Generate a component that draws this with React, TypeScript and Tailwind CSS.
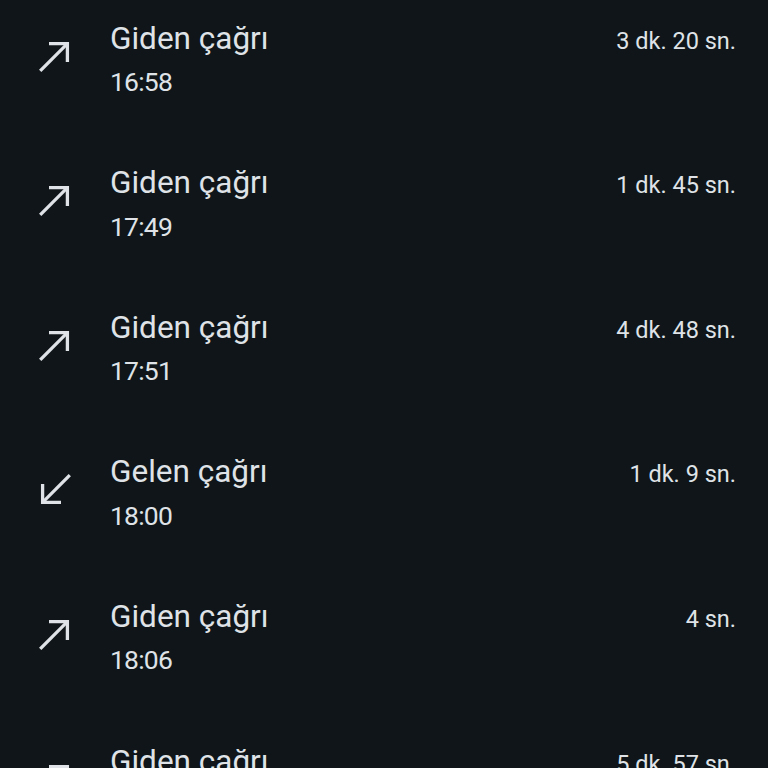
import React from "react";

interface CallItem {
  type: "out" | "in";
  time: string;
  duration: string;
}

const calls: CallItem[] = [
  { type: "out", time: "16:58", duration: "3 dk. 20 sn." },
  { type: "out", time: "17:49", duration: "1 dk. 45 sn." },
  { type: "out", time: "17:51", duration: "4 dk. 48 sn." },
  { type: "in", time: "18:00", duration: "1 dk. 9 sn." },
  { type: "out", time: "18:06", duration: "4 sn." },
  { type: "out", time: "18:11", duration: "5 dk. 57 sn." },
];

function OutgoingIcon() {
  return (
    <svg viewBox="0 0 24 24" className="w-12 h-12" fill="none" stroke="#dfe3e7" strokeWidth={1.65}>
      <polyline points="9,5.8 18.2,5.8 18.2,15" strokeLinejoin="miter" />
      <line x1="18.2" y1="5.8" x2="4.6" y2="19.4" />
    </svg>
  );
}

function IncomingIcon() {
  return (
    <svg viewBox="0 0 24 24" className="w-12 h-12" fill="none" stroke="#dfe3e7" strokeWidth={1.65}>
      <polyline points="5.8,9 5.8,18.2 15,18.2" strokeLinejoin="miter" />
      <line x1="5.8" y1="18.2" x2="19.4" y2="4.6" />
    </svg>
  );
}

export default function App() {
  return (
    <div className="h-[768px] w-[768px] overflow-hidden bg-[#0f1519] font-['Roboto',sans-serif] text-[#dfe3e7]">
      <div className="-mt-[14px]">
        {calls.map((c, i) => (
          <div key={i} className="flex items-center h-[144.6px] pl-[31px] pr-8">
            <div className="w-[79px] shrink-0 mb-[5px]">
              {c.type === "out" ? <OutgoingIcon /> : <IncomingIcon />}
            </div>
            <div className="flex-1">
              <div className="flex items-baseline justify-between pt-[3px]">
                <span className="text-[31.5px] leading-[40px]">
                  {c.type === "out" ? "Giden çağrı" : "Gelen çağrı"}
                </span>
                <span className="text-[23.5px]">{c.duration}</span>
              </div>
              <div className="mt-[5px] mb-[1px] text-[26.5px] leading-[36px] tracking-[-0.8px]">{c.time}</div>
            </div>
          </div>
        ))}
      </div>
    </div>
  );
}
